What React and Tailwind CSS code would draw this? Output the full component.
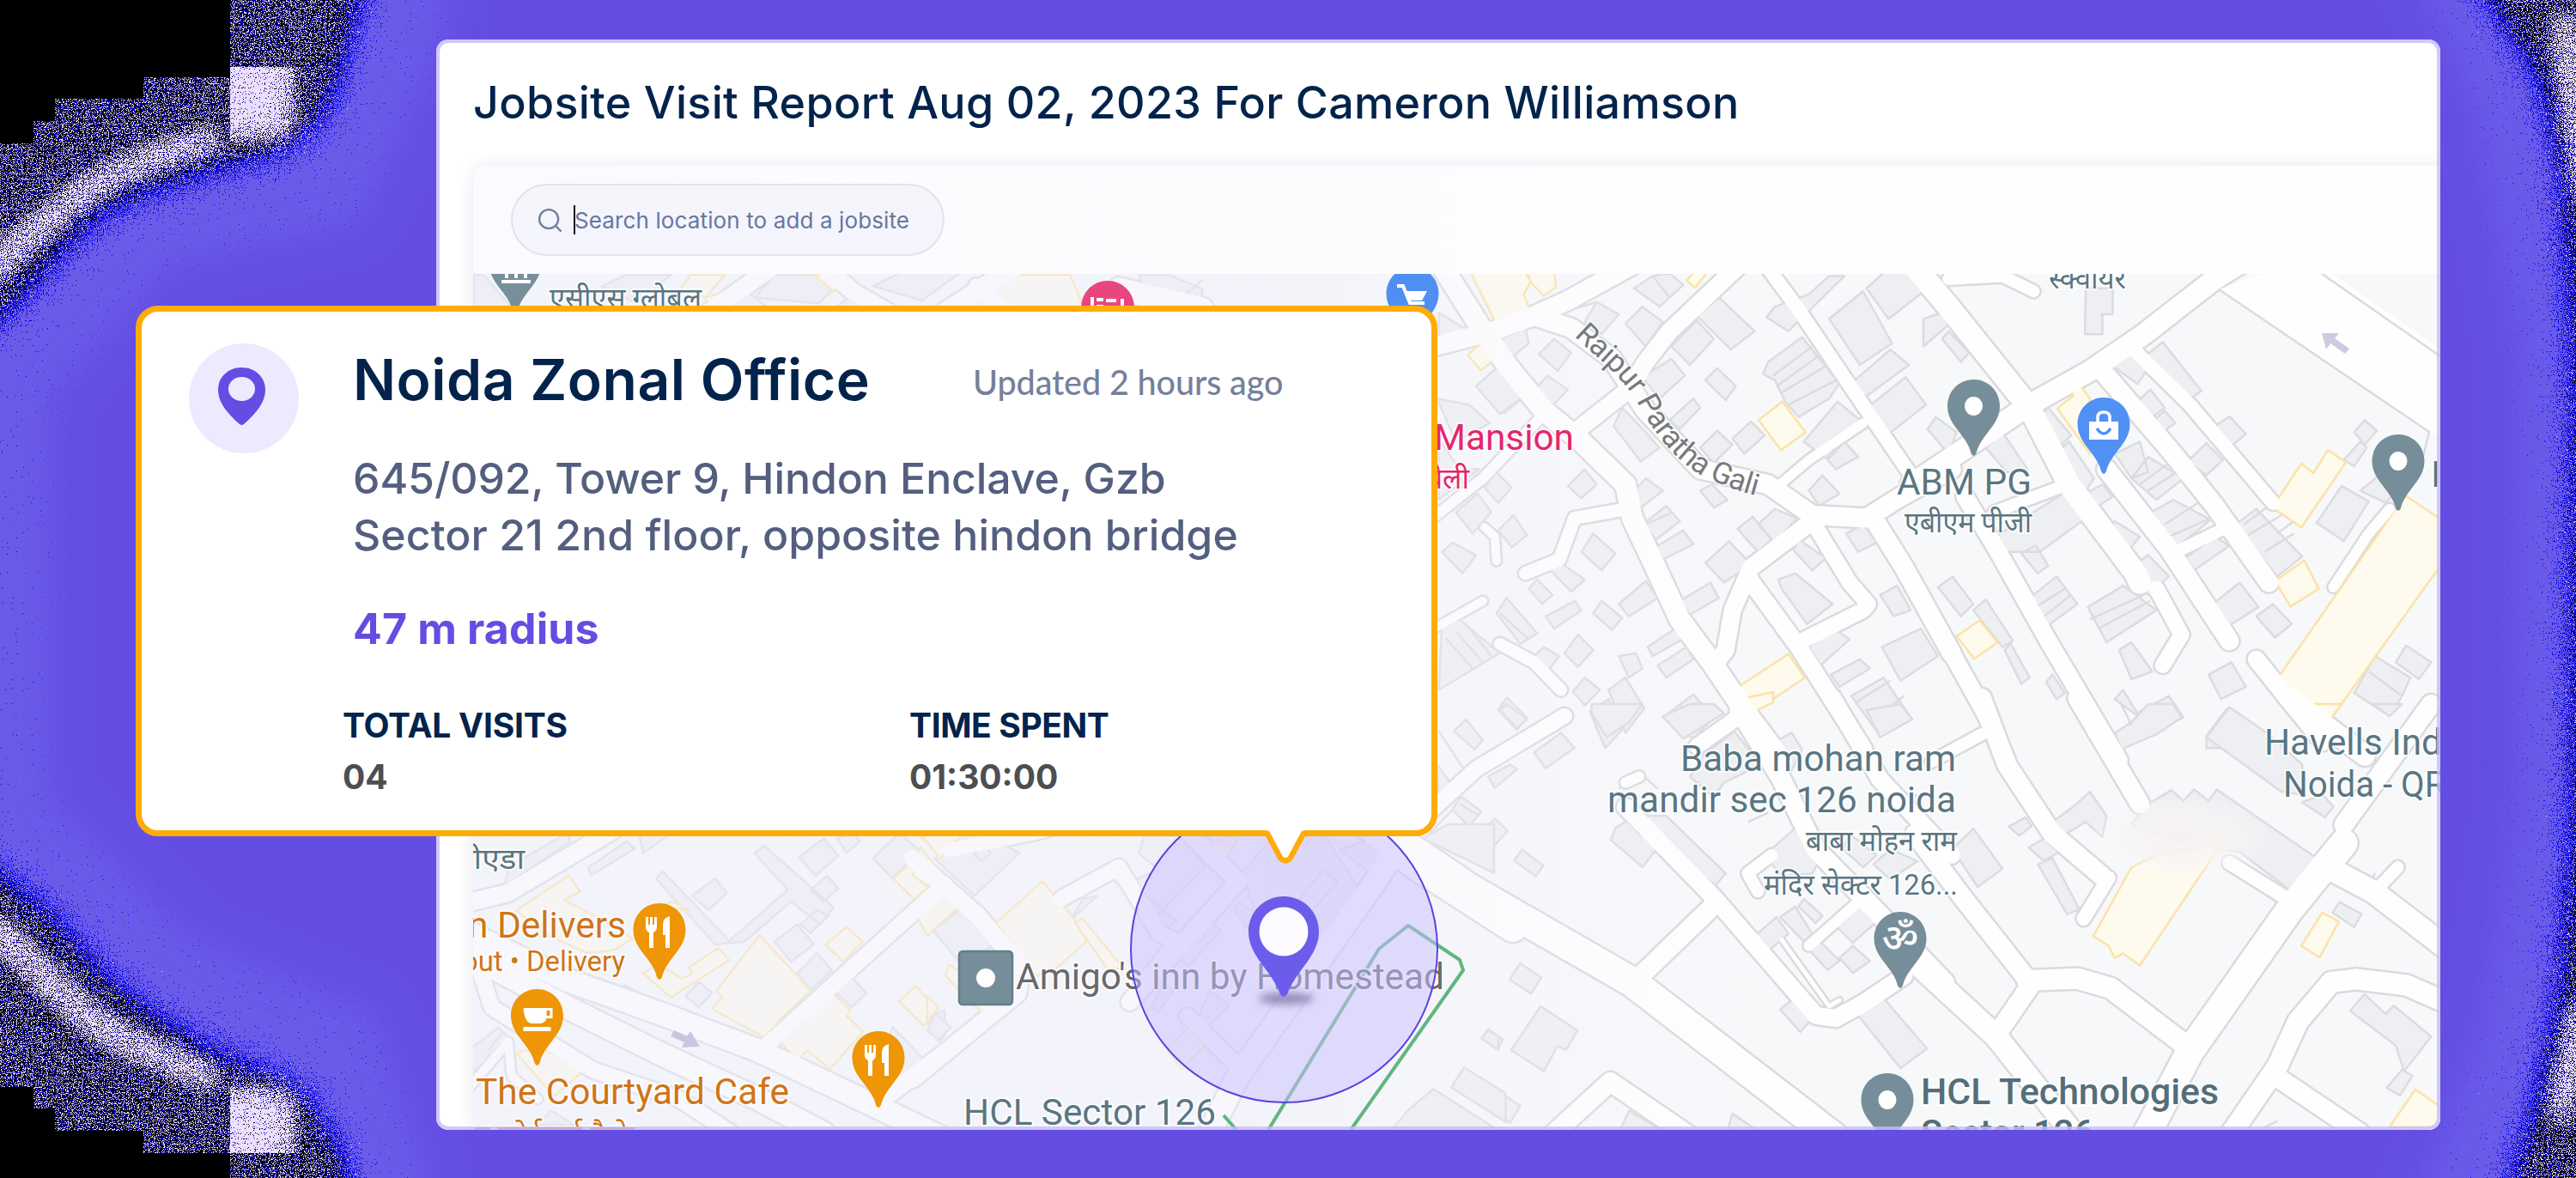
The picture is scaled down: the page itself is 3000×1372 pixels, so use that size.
import React from "react";
import { Search } from "lucide-react";

/* ---------- map tiles: each tile has its own local grid ---------- */
const tiles = [
  {
    // north centre
    t: "translate(1640 300) scale(.3954 .3571)",
    roads: [
      [24, "M100 30L215 230L290 350L400 500L500 590L640 740L660 850L720 990L800 1180L900 1330L985 1470L1100 1640"],
      [22, "M40 300L250 240L370 190L470 140L700 0"],
      [22, "M370 190L480 230L600 330L700 500L860 690L1060 740L1190 840L1350 850L1450 780L1600 690"],
      [20, "M490 570L650 430L700 340L770 240L980 20"],
      [16, "M1050 20L1150 170L1290 400L1450 660L1500 740"],
      [20, "M1190 860L1010 1010L955 1150L935 1280L900 1330"],
      [18, "M1190 860L1300 1060L1355 1130L1340 1150L1160 1250"],
      [20, "M1005 1050L1150 1270L1340 1600"],
      [22, "M1370 850L1460 1010L1600 1290"],
      [15, "M640 820L490 850L445 985L345 1030"],
      [12, "M60 860L220 720L400 510"],
      [10, "M225 880L255 910L260 990"],
      [14, "M270 1260L370 1320L450 1410"],
      [11, "M1090 745L1180 660L1340 540"],
      [10, "M60 1220L220 1120"],
    ],
    blocks:
      "M555 145L620 185L570 250L520 210zM690 160L750 210L700 290L640 215zM665 100L720 60L770 130L740 160zM720 60L770 50L810 90L770 130zM915 130L1020 240L950 300L850 190zM850 205L900 265L830 350L775 290zM775 330L815 385L740 460L690 390zM430 265L480 310L440 370L385 315zM345 230L355 280L300 330L255 275zM410 385L470 430L420 490L365 440zM280 340L365 430L270 510L200 420zM910 360L965 420L935 465L875 400zM840 460L860 490L800 560L770 530zM1010 535L1050 580L990 640L955 590zM910 565L955 610L900 670L860 620zM1160 260L1270 410L1240 460L1150 520L1110 470L1080 400L1045 380L1060 340zM1265 470L1330 530L1230 655L1165 600zM1180 120L1240 60L1285 60L1120 240L1055 195L1080 160zM1340 110L1425 280L1330 350L1240 200zM1350 100L1400 50L1520 50L1530 100L1415 200zM1420 300L1475 350L1340 460L1305 410zM1465 390L1525 480L1410 580L1340 500zM1285 600L1325 650L1260 690L1235 660zM1220 710L1270 770L1210 810L1180 760zM630 490L700 570L740 620L685 665L640 600L605 550zM520 690L555 740L510 785L470 745zM260 700L305 750L265 800L225 750zM205 770L245 830L190 900L140 830zM310 840L350 905L305 945L265 890zM700 720L750 760L680 820L650 780zM760 810L800 860L730 920L690 870zM810 890L840 935L740 990L720 950zM895 740L940 790L900 815L860 760zM1015 845L1070 920L1030 960L970 885zM1080 820L1145 850L1080 930L1030 870zM945 925L1010 1000L930 1060L875 995zM545 900L610 965L570 1020L510 960zM435 985L520 1050L480 1090L410 1010zM380 1050L425 1100L395 1130L355 1080zM290 1110L380 1225L330 1260L260 1160zM490 1120L510 1150L430 1210L405 1170zM700 1055L735 1110L650 1170L620 1130zM890 1060L915 1110L830 1165L800 1120zM570 1120L630 1175L600 1215L545 1160zM100 1180L150 1180L270 1290L90 1410zM500 1230L545 1280L500 1335L460 1290zM400 1270L445 1300L410 1350L360 1310zM800 1200L815 1240L720 1300L705 1270zM820 1270L840 1310L760 1370L735 1330zM620 1300L670 1290L690 1340L650 1370zM640 1370L695 1470L640 1550L590 1410zM520 1370L565 1410L520 1460L485 1415zM590 1440L630 1540L580 1600L535 1480zM290 1435L350 1500L320 1540L265 1475zM840 1425L900 1500L840 1568L750 1500zM1150 920L1230 980L1190 1020L1135 955zM1140 1030L1250 1130L1175 1195L1100 1080L1090 1050zM1340 870L1380 930L1325 960L1290 900zM1440 1070L1480 1150L1430 1170L1390 1100zM1240 1200L1300 1245L1215 1330L1180 1270zM1510 1210L1560 1300L1450 1380L1395 1270zM1330 1310L1360 1340L1270 1400L1245 1360zM1400 1370L1480 1500L1390 1560L1305 1430zM90 590L150 690L210 690L90 790zM85 460L180 480L240 540L140 600zM90 180L180 240L90 265zM130 930L200 970L160 1030L100 960z",
    yellow:
      "M175 30L350 40L360 80L340 120L360 175L340 190L260 218zM345 50L430 50L435 95L400 125L365 85zM222 270L265 322L215 368L175 318zM1102 470L1170 570L1098 628L1032 530zM1120 1293L1168 1370L1010 1488L990 1465L970 1475L945 1420zM820 75L840 50L880 50L845 98z",
    lines:
      "M435 185L555 145M200 420L280 340M280 510L390 410M1120 480L1260 400M1100 440L1235 350M1085 420L1210 320M1075 385L1190 290M1240 200L1340 110M110 1240L190 1340M140 1220L220 1320M170 1195L245 1300M800 1460L870 1530M1400 1480L1460 1430M1320 1450L1420 1380M700 870L780 830M270 1160L350 1240",
  },
  {
    // north east
    t: "translate(2240 300) scale(.4847 .3571)",
    roads: [
      [26, "M-20 30L60 160L255 490L350 740L510 1030L520 1060"],
      [24, "M-30 740L70 650L255 480L400 370L530 250L700 70L760 20"],
      [22, "M430 370L600 640L700 810L830 1060"],
      [16, "M505 300L640 480L840 800"],
      [22, "M440 690L590 950L735 1250"],
      [20, "M100 780L180 960L300 1250L470 1640"],
      [20, "M-30 1050L150 1490L200 1640"],
      [14, "M170 830L345 740"],
      [12, "M985 1075L1070 900L1120 820"],
      [20, "M800 1310L870 1430L960 1580"],
      [18, "M560 1080L620 1230L575 1330"],
      [14, "M60 70L190 60L265 110"],
      [14, "M600 965L720 885"],
    ],
    blocks:
      "M390 100L455 100L455 185L430 185L430 250L388 250zM575 275L668 435L620 480L530 325zM490 310L540 360L515 412L450 350zM545 430L580 490L550 520L515 470zM580 500L605 540L570 575L550 535zM735 518L775 575L740 615L695 555zM680 605L720 660L680 710L635 665zM1060 530L1090 565L1060 610L1035 570zM1050 600L1065 620L1035 680L1010 660zM1005 745L1070 795L1010 925L945 865zM1095 710L1140 760L1110 800L1050 760zM60 240L110 310L90 340L45 265zM0 200L45 180L60 220L0 290zM30 520L80 570L60 640L10 560zM190 570L250 690L200 700L150 620zM300 490L355 580L320 625L270 530zM350 600L410 720L390 760L325 630zM430 740L455 780L420 810L390 770zM460 640L520 600L540 700L500 720zM540 650L625 720L560 790L500 720zM600 790L690 855L600 955L510 860zM460 860L520 910L490 960L450 880zM340 765L390 850L280 960L200 960L150 930zM270 940L300 1005L275 1030L235 965zM540 970L590 1040L540 1100L490 1020zM320 1040L370 1130L300 1200L255 1110zM480 1070L560 1150L440 1255L395 1140zM70 1040L120 1130L90 1170L35 1075zM150 1115L215 1250L190 1270L120 1150zM210 1260L255 1370L235 1390L195 1280zM760 1060L805 1140L735 1200L695 1130zM700 910L735 940L650 1020L630 980zM840 1130L885 1195L845 1240L800 1170zM800 820L910 975L850 1040L750 870zM500 1255L550 1350L500 1375L470 1280zM740 1320L775 1400L715 1440L685 1360zM590 1430L625 1500L565 1540L520 1480zM480 1410L520 1500L460 1440zM730 1470L830 1560L830 1600L680 1600L680 1560zM1085 1300L1170 1370L1150 1430L1120 1495L1035 1420zM1160 1265L1220 1320L1190 1375L1135 1320zM310 1360L340 1420L320 1440L295 1385z",
    yellow:
      "M365 393L400 460L400 640L322 492L360 450L345 412zM972 628L1015 668L908 880L838 815L908 672L937 703zM1160 778L1250 860L1250 990L975 1512L842 1390L1140 810zM915 988L950 1080L882 1138L845 1055zM135 1183L178 1255L122 1308L80 1235z",
    lines:
      "M0 75L170 380M850 900L890 860M520 740L600 660M540 760L620 690M770 870L830 810M400 1180L530 1100M420 1210L545 1120M780 905L860 840M820 960L890 900M270 1140L340 1080M290 1170L355 1100M1070 1350L1150 1430M580 870L660 800M590 910L690 850",
  },
  {
    // south centre
    t: "translate(1640 820) scale(.3954 .352)",
    roads: [
      [34, "M-120 400L30 495L180 610L660 920L1250 1430"],
      [22, "M665 920L905 660"],
      [20, "M640 340L900 640L1100 900L1200 1030L1260 1040L1340 990L1460 900"],
      [22, "M975 20L1100 250L1200 480L1340 640L1580 920"],
      [18, "M850 140L975 40"],
      [18, "M60 360L200 215L460 40"],
      [20, "M1250 -20L1390 250L1600 500"],
      [22, "M420 1430L595 1250L830 1430"],
      [5, "M1100 780L1240 1000L1270 980"],
      [12, "M1180 800L1330 650"],
      [12, "M640 260L680 240"],
      [14, "M1030 620L1000 560L1070 500"],
    ],
    blocks:
      "M170 50L220 120L195 150L135 90zM290 0L350 50L320 80L270 20zM450 95L490 145L405 212L370 160zM540 0L690 0L650 60L585 110L540 30zM300 200L320 215L255 278L235 240zM155 305L215 355L180 405L130 350zM255 378L293 420L240 485L205 440zM335 482L398 535L375 570L312 518zM660 375L745 460L690 540L597 450L610 410zM760 370L935 560L905 600L745 470L700 370zM330 858L392 905L362 958L298 912zM390 1000L498 1080L465 1145L440 1130L400 1215L303 1145zM235 1075L278 1110L265 1140L216 1105zM165 1205L330 1330L300 1385L130 1260zM650 1345L760 1420L620 1420zM955 1355L1040 1420L940 1410zM750 40L830 0L900 0L930 30L810 115zM1130 95L1160 150L1120 240L1070 130zM870 170L960 90L1040 200L930 260L900 310L830 240zM1085 705L1120 760L1060 818L1018 770zM1140 670L1190 760L1165 785L1095 705zM1165 645L1220 700L1200 725L1150 670zM1330 665L1380 720L1310 790L1255 730zM1200 770L1270 850L1235 880L1170 800zM1310 800L1360 850L1310 890L1270 840zM1390 960L1528 1140L1450 1205L1318 1020zM1145 965L1198 1030L1155 1085L1095 1010zM1140 410L1210 520L1190 560L1100 570L1050 500zM1300 430L1380 500L1340 540L1280 480zM1420 480L1500 520L1420 580L1370 530zM1350 20L1450 0L1485 50L1390 110zM85 200L130 270L90 320z",
    yellow: "M950 -10L985 -10L1000 35L1075 -5L1075 -40z",
    lines:
      "M45 450L130 350M90 90L175 235M150 330L210 370M640 380L690 440M1400 360L1500 300M1000 390L1060 360M620 280L680 225L735 280",
  },
  {
    // south east
    t: "translate(2240 820) scale(.4847 .352)",
    roads: [
      [22, "M140 -20L200 200L310 430L430 570"],
      [16, "M445 575L385 710"],
      [22, "M370 -20L520 330"],
      [22, "M-20 430L100 650L255 920"],
      [26, "M-30 840L175 1100L370 1440"],
      [24, "M250 915L370 908L450 940L640 1140"],
      [22, "M175 1095L260 925"],
      [32, "M1010 460L880 680L640 1150L530 1440"],
      [16, "M735 525L880 650"],
      [26, "M970 540L1080 620L1250 800"],
      [24, "M730 1440L850 1200L900 1050L980 920L1040 910L1160 930L1260 990"],
      [22, "M850 1235L1050 1420"],
      [14, "M20 190L140 100"],
      [24, "M880 -20L1060 170"],
      [22, "M1010 400L1220 0"],
      [14, "M1085 620L1140 540"],
    ],
    blocks:
      "M735 10L830 100L910 200L910 300L860 290L680 110zM595 285L625 320L650 283L685 320L705 283L945 510L885 620L760 490L640 470L500 400L530 340zM960 300L985 340L965 375L910 325zM400 290L440 370L430 440L390 390L330 440L310 390L360 340zM245 375L260 405L230 435L205 405zM120 412L190 545L130 605L70 480zM290 445L325 490L290 520L253 475zM310 510L375 680L345 695L275 530zM1000 655L1053 695L1035 738L983 690zM1060 960L1110 1025L1130 998L1220 1100L1155 1215L1135 1130L1025 1015zM1150 1210L1175 1230L1145 1295L1113 1270zM460 95L500 60L540 0L600 0L620 45L560 100L475 150zM1080 0L1150 0L1120 40z",
    yellow:
      "M500 540L560 500L715 465L520 865L480 825L460 840L445 800L408 768zM958 690L998 720L952 838L908 800zM1182 1275L1250 1340L1250 1400L1120 1400zM910 0L1005 0L975 55z",
    lines:
      "M540 405L570 430L585 395L655 460M600 470L640 520M985 510L1070 595L1085 560M500 70L475 0M820 1400L850 1380",
  },
  {
    // south west
    t: "translate(500 960) scale(.3827 .3333)",
    roads: [
      [20, "M60 290L240 240L560 20L640 -40"],
      [26, "M100 370L420 545L700 660L1000 790L1568 1100"],
      [26, "M160 480L420 640L700 800L1000 960L1200 1080"],
      [18, "M140 460L190 640L330 740L500 860L760 960L920 1080"],
      [18, "M1010 790L1240 550L1568 210"],
      [20, "M1380 960L1568 800"],
      [10, "M100 950L240 760L250 880L330 960"],
    ],
    blocks:
      "M240 150L420 30L430 60L230 215zM600 60L625 85L490 180L485 150zM710 165L900 390L910 410L1090 230L990 100L1020 75L1230 290L1190 350L1100 270L960 410L870 420L690 190zM870 190L905 240L850 300L800 250zM1200 50L1245 110L1175 180L1125 115zM1210 180L1245 225L1200 270L1160 230zM1180 300L1215 320L1160 380L1130 350zM1120 350L1170 420L1100 480L1050 410zM1180 450L1225 510L1160 580L1120 520zM1270 515L1330 590L1285 640L1220 570zM1430 30L1490 90L1410 190L1350 120zM640 40L740 30L650 100zM1240 50L1290 30L1310 60L1270 100zM210 710L245 750L130 870L130 780zM820 550L860 590L820 640L780 600zM1410 710L1530 850L1410 960L1380 800zM1510 680L1568 650L1568 740L1550 760zM370 1000L440 1050L330 1050z",
    yellow:
      "M425 178L458 235L410 265L520 330L620 400L560 440L480 450L330 370L265 300zM880 432L912 475L735 605L650 520L700 490L770 540L800 520L790 500zM1005 388L1160 580L1070 680L1020 745L860 645L890 605L875 580zM1215 575L1280 650L1270 670L1320 725L1220 855L1150 790L1120 825L1055 745zM1270 360L1318 410L1260 480L1205 420zM1495 105L1555 180L1475 262L1412 190zM1540 230L1580 200L1580 330L1520 380L1468 310zM1480 565L1545 650L1505 705L1430 620zM355 790L470 860L380 950L310 860L265 800L290 790zM1480 30L1580 30L1580 130zM740 270L790 300L700 290z",
    lines:
      "M940 500L1070 670M1150 790L1270 670M400 880L440 830M420 540L560 640M590 560L830 700M170 820L230 760M180 790L220 730M1400 960L1530 850",
  },
  {
    // around the job site
    t: "translate(1080 940) scale(.4209 .3333)",
    roads: [
      [20, "M-40 180L140 380L260 560L250 650L-40 950"],
      [18, "M370 320L530 210L640 440L690 470L560 680"],
      [20, "M700 60L860 260L560 680"],
      [26, "M1340 60L1250 240L860 940L780 1140"],
      [18, "M720 730L870 920"],
      [34, "M1240 80L1350 200L1620 420"],
      [16, "M60 150L300 90L500 20"],
    ],
    blocks:
      "M120 70L255 160L130 310L20 180zM15 430L100 350L180 400L200 460L100 560zM600 100L700 100L770 210L620 400L580 250L640 220L585 160zM470 310L400 390L430 320zM520 220L690 400L660 420L510 250zM760 375L812 430L720 560L670 490zM1095 220L1135 260L1040 400L990 380zM860 330L960 420L930 500L850 360zM870 230L960 100L1100 100L1195 290L1050 560L920 420zM1140 150L1230 110L1290 130L1230 235zM780 640L835 690L770 780L745 750zM650 620L680 640L640 715L620 700zM1440 60L1568 60L1568 230L1370 110zM1550 780L1580 800L1580 850L1535 810zM1485 910L1600 1000L1600 1100L1450 980zM1330 1060L1400 985L1568 1120L1290 1120zM20 720L65 770L30 815L0 780z",
    yellow:
      "M318 260L400 380L440 470L350 570L300 590L190 405zM430 390L540 560L500 570L410 405zM45 275L95 340L0 450L-30 380zM-20 140L35 225L0 275L-40 240zM-20 90L100 90L35 180zM60 550L230 700L168 740L50 590zM720 770L768 830L705 915L665 850zM0 660L30 700L0 750zM780 130L840 100L860 110L820 190z",
    lines:
      "M155 130L175 160L150 190L130 165zM270 520L400 380M350 570L440 470M200 460L120 560M760 440L770 450L755 470",
  },
  {
    // strip above the popover
    t: "translate(500 0) scale(.574 .3333)",
    roads: [
      [20, "M560 1100L690 940"],
      [22, "M1020 1120L1190 930"],
      [20, "M800 930L860 1020L960 1120"],
      [18, "M1180 1100L1110 1000"],
      [26, "M1568 1080L1400 1010"],
    ],
    blocks:
      "M400 960L490 960L420 1060L350 1000zM700 960L780 960L820 1010L790 1060L660 1040zM960 950L1080 950L1000 1050L900 1000zM560 1080L640 1010L690 1080zM880 1000L930 1080L820 1080zM1440 960L1500 960L1568 1010L1568 1080L1460 1080zM90 960L110 960L170 1080L90 1080z",
    yellow:
      "M530 960L600 960L560 1040L510 1010zM780 960L850 960L820 1020zM1180 960L1300 960L1330 1080L1040 1080zM560 1040L600 1020L570 1080z",
    lines: "M1240 960L1270 1080M1210 960L1220 1080M1120 1000L1160 1080M1400 1080L1440 1000M1500 1080L1568 980",
  },
];

const NS = "non-scaling-stroke";

function MapTiles() {
  return (
    <>
      {tiles.map((r, i) => (
        <g key={i} transform={r.t} fill="none" stroke="#dadadf" strokeLinejoin="round" strokeLinecap="round">
          {r.roads.map(([w, d], j) => (
            <path key={j} d={d} strokeWidth={w + 5} vectorEffect={NS} />
          ))}
        </g>
      ))}
      {tiles.map((r, i) => (
        <g key={i} transform={r.t} strokeWidth="2.5" strokeLinejoin="round">
          <path d={r.blocks} fill="#eeeff2" stroke="#dcdce0" vectorEffect={NS} />
          <path d={r.lines} fill="none" stroke="#dcdce0" vectorEffect={NS} />
          <path d={r.yellow} fill="#fefaee" stroke="#fbe3a6" vectorEffect={NS} />
        </g>
      ))}
      {tiles.map((r, i) => (
        <g key={i} transform={r.t} fill="none" stroke="#fefefe" strokeLinejoin="round" strokeLinecap="round">
          {r.roads.map(([w, d], j) => (
            <path key={j} d={d} strokeWidth={w} vectorEffect={NS} />
          ))}
        </g>
      ))}
    </>
  );
}

function Pin({ x, y, color, children }) {
  return (
    <g transform={`translate(${x} ${y})`}>
      <path d="M0 0C17 0 30.500 13.500 30.500 31C30.500 43 24 52 17 61C10 70 5 77 3 86Q0 92 -3 86C-5 77 -10 70 -17 61C-24 52 -30.500 43 -30.500 31C-30.500 13.500 -17 0 0 0Z" fill={color} />
      {children || <ellipse cy="31" rx="10.500" ry="11" fill="#fff" />}
    </g>
  );
}

function Cutlery() {
  return (
    <g fill="#fff">
      <path d="M-16 16h3v9h2v-9h3v9h2v-9h3v12q0 4-4 6v18h-5v-18q-4-2-4-6z" />
      <path d="M12 15v37h-5v-15h-3v-12q0-8 8-10z" />
    </g>
  );
}

function Label({ x, y, w, size = 42, color = "#5a7683", weight = 400, anchor = "start", children }) {
  return (
    <text
      x={x}
      y={y}
      fontSize={size}
      fontWeight={weight}
      fill={color}
      textAnchor={anchor}
      textLength={w}
      lengthAdjust="spacingAndGlyphs"
      stroke="#fff"
      strokeWidth="4"
      strokeOpacity=".75"
      paintOrder="stroke"
    >
      {children}
    </text>
  );
}

function SiteMap() {
  return (
    <svg
      className="block h-[997px] w-[2291px] font-['Roboto','Noto_Sans',sans-serif]"
      viewBox="551 319 2291 997"
    >
      <defs>
        <linearGradient id="tint" x1="0" x2="1" y1="0" y2="0">
          <stop offset="0" stopColor="#eeeefb" stopOpacity=".45" />
          <stop offset=".4" stopColor="#eeeefb" stopOpacity=".45" />
          <stop offset=".65" stopColor="#f4f5fb" stopOpacity="0" />
        </linearGradient>
        <radialGradient id="haze">
          <stop offset="0" stopColor="#f6f1f1" />
          <stop offset=".5" stopColor="#f7f5f4" stopOpacity=".85" />
          <stop offset="1" stopColor="#f8f9fb" stopOpacity="0" />
        </radialGradient>
        <filter id="soft" x="-50%" y="-150%" width="200%" height="400%">
          <feGaussianBlur stdDeviation="5" />
        </filter>
        <path id="gali" d="M1833 391C1868 425 1893 440 1914 482C1938 520 1965 550 2000 562Q2025 573 2060 581" />
      </defs>
      <rect x="551" y="319" width="2291" height="997" fill="#f7f8fa" />
      <MapTiles />
      <path d="M2584 337L2690 300L2860 420V520L2829 503z" fill="#fefefe" />
      <path d="M2584 337L2829 503L2820 540M2700 316L2842 415" fill="none" stroke="#dadadf" strokeWidth="2.500" />
      <ellipse cx="2540" cy="975" rx="110" ry="48" fill="url(#haze)" />
      <rect x="551" y="319" width="2291" height="997" fill="url(#tint)" />

      <path d="M2704 388h20l-5 6 17 12-5 6-17-12-5 7z" fill="#cdcbe0" />
      <path d="M781 1207l4-7 15 7 4-6 11 18-21 1 3-6z" fill="#c9c7e0" />
      <path d="M1477 1316L1606 1105L1640 1078L1700 1118L1704 1130L1573 1316M1425 1299L1440 1316" fill="none" stroke="#62b57f" strokeWidth="4" strokeLinejoin="round" />

      <text fontSize="35" fill="#77797c" stroke="#fff" strokeWidth="3" strokeOpacity=".7" paintOrder="stroke">
        <textPath href="#gali" textLength="290">Raipur Paratha Gali</textPath>
      </text>

      <Label x="1833" y="524" w="163" color="#e5266c" anchor="end">Mansion</Label>
      <Label x="1711" y="569" size="33" color="#e5266c" anchor="end">हवेली</Label>
      <Label x="2209" y="576" w="157">ABM PG</Label>
      <Label x="2218" y="620" w="148" size="33">एबीएम पीजी</Label>
      <Label x="2386" y="336" w="90" size="33">स्क्वायर</Label>
      <Label x="2831" y="567">India</Label>
      <Label x="1957" y="898" w="321">Baba mohan ram</Label>
      <Label x="1872" y="946" w="406">mandir sec 126 noida</Label>
      <Label x="2103" y="991" w="176" size="33">बाबा मोहन राम</Label>
      <Label x="2054" y="1042" w="226" size="33">मंदिर सेक्टर 126...</Label>
      <Label x="2637" y="879" w="240">Havells India</Label>
      <Label x="2659" y="928" w="217">Noida - QRG</Label>
      <Label x="2237" y="1286" w="347" weight="500" color="#546e7a">HCL Technologies</Label>
      <Label x="2237" y="1334" w="202" weight="500" color="#546e7a">Sector 126</Label>
      <Label x="729" y="1092" size="43" w="184" color="#cf7519" anchor="end">n Delivers</Label>
      <Label x="728" y="1131" size="34" w="190" color="#cf7519" anchor="end">out • Delivery</Label>
      <Label x="554" y="1286" size="43" w="365" color="#cf7519">The Courtyard Cafe</Label>
      <Label x="553" y="1334" size="34" w="186" color="#cf7519">द कोर्टयार्ड कैफे</Label>
      <Label x="611" y="1012" size="33" w="80" anchor="end">नोएडा</Label>
      <Label x="640" y="359" size="34" w="177">एसीएस ग्लोबल</Label>
      <Label x="1122" y="1310" w="294">HCL Sector 126</Label>

      <Pin x="600" y="276" color="#778f9b">
        <path d="M584 328h34M590 324v-8M601 324v-8M612 324v-8" transform="translate(-600 -276)" stroke="#fff" strokeWidth="4" />
      </Pin>
      <circle cx="1290" cy="358" r="31" fill="#e9467f" />
      <path d="M1272 346v14M1277 357h8M1277 349h8M1288 350h12M1307 348v12" stroke="#fff" strokeWidth="4" />
      <Pin x="1645" y="311" color="#4f8ff4">
        <g transform="translate(-1645 -311)" fill="none" stroke="#fff" strokeWidth="4">
          <path d="M1627 333h7l8 20h17" />
          <path d="M1637 339h25l-6 11h-15z" fill="#fff" stroke="none" />
        </g>
      </Pin>
      <Pin x="2298.500" y="442" color="#768e9a" />
      <Pin x="2793" y="506" color="#768e9a" />
      <Pin x="2198" y="1250" color="#768e9a" />
      <Pin x="2213" y="1062" color="#768e9a">
        <text y="46" fontSize="45" fontWeight="500" fill="#fff" textAnchor="middle">ॐ</text>
      </Pin>
      <Pin x="2450" y="463" color="#5191f3">
        <path d="M-17 28H17V49H-17z" fill="#fff" />
        <path d="M-7 28v-5q0-6 7-6t7 6v5" fill="none" stroke="#fff" strokeWidth="3.500" />
        <path d="M-8 36q8 12 16 0" fill="none" stroke="#5191f3" strokeWidth="3.500" />
      </Pin>
      <Pin x="768" y="1052" color="#ee9606"><Cutlery /></Pin>
      <Pin x="1023" y="1201" color="#ee9606"><Cutlery /></Pin>
      <Pin x="625.500" y="1152" color="#ee9606">
        <path d="M-16 22H18V34H11Q9 40 3 40H-7Q-15 38 -16 22zM-16 44H16V49H-16z" fill="#fff" />
        <path d="M11 25h4v6h-4z" fill="#ee9606" />
      </Pin>
      <rect x="1117" y="1108" width="62" height="62" rx="4" fill="#768e9a" stroke="#627f8c" strokeWidth="2.500" />
      <circle cx="1148" cy="1139" r="11" fill="#fff" />
      <Label x="1183" y="1152" w="499" color="#68696c">Amigo's inn by Homestead</Label>

      <circle cx="1495.500" cy="1105.500" r="178.500" fill="#c9bfff" fillOpacity=".5" stroke="#5a43de" strokeWidth="2" />
      <ellipse cx="1498" cy="1163" rx="32" ry="7" fill="#5f588a" fillOpacity=".6" filter="url(#soft)" />
      <path d="M1495 1044c23 0 41 18 41 41 0 20-13 34-23 48q-10 14-14 25-4 6-8 0-4-11-14-25c-10-14-23-28-23-48 0-23 18-41 41-41z" fill="#6c5ceb" />
      <circle cx="1495" cy="1085" r="28.500" fill="#fbfaff" />
    </svg>
  );
}

/* ---------- grainy purple backdrop ---------- */
function Grain({ id, seed, color, blur, bias = "-85" }) {
  return (
    <filter id={id} filterUnits="userSpaceOnUse" x="-60" y="-60" width="3120" height="1500" colorInterpolationFilters="sRGB">
      <feGaussianBlur in="SourceAlpha" stdDeviation={blur} result="b" />
      <feTurbulence type="fractalNoise" baseFrequency=".83" numOctaves="2" seed={seed} />
      <feColorMatrix values="0 0 0 0 0  0 0 0 0 0  0 0 0 0 0  1 0 0 0 0" result="n" />
      <feComposite in="b" in2="n" operator="arithmetic" k2="60" k3="110" k4={bias} result="m" />
      <feFlood floodColor={color} />
      <feComposite in2="m" operator="in" />
    </filter>
  );
}

function Backdrop() {
  const core =
    "M-160 425L0 385L60 318L110 265L160 235L268 200L330 185L385 140L410 60L470 -160H2830L2890 0L2950 90L2976 200L2990 400V950L2975 1150L2945 1290L2880 1500H440L405 1340L355 1260L268 1225L190 1180L130 1135L80 1075L0 1005L-160 960Z";
  return (
    <svg className="absolute inset-0 h-[1372px] w-[3000px]" viewBox="0 0 3000 1372">
      <defs>
        <clipPath id="steps">
          <path d="M0 167H39V141H64V115H167V90H268V0H3000V1372H268V1343H167V1317H64V1291H39V1266H0Z" />
        </clipPath>
        <clipPath id="plates">
          <path d="M268 78H420V190H268zM268 1240H420V1343H268z" />
        </clipPath>
        <Grain id="grainBlue" seed="3" color="#0000e6" blur="22" />
        <Grain id="grainPale" seed="11" color="#ecdfff" blur="20" />
        <Grain id="grainCore" seed="23" color="#6a5be9" blur="22" bias="-82" />
        <filter id="smooth" filterUnits="userSpaceOnUse" x="-60" y="-60" width="3120" height="1500">
          <feGaussianBlur stdDeviation="22" />
        </filter>
      </defs>
      <g clipPath="url(#steps)">
        <path d="M-100 -100H3100V1500H-100z" fillOpacity=".38" filter="url(#grainBlue)" />
        <path d="M-100 -100H3100V1500H-100z" fillOpacity=".37" filter="url(#grainPale)" />
        <path
          d="M-60 350L0 305L40 270L100 222L160 190L240 165L268 150M-60 1060L0 1085L60 1145L120 1200L190 1230L268 1265M2985 0L3010 250M3010 1150L2975 1320"
          fill="none"
          stroke="#000"
          strokeOpacity=".8"
          strokeWidth="52"
          filter="url(#grainPale)"
        />
        <path d={core} stroke="#000" strokeWidth="26" filter="url(#grainBlue)" />
        <g clipPath="url(#plates)">
          <path d="M210 20H350V170H210zM210 1260H350V1400H210z" fillOpacity=".85" filter="url(#grainPale)" />
        </g>
        <path d={core} filter="url(#grainCore)" />
        <path d="M60 460L200 310L420 260L520 40V-60H2800L2880 120L2930 400V950L2890 1200L2800 1440H520L440 1180L220 1090L60 930Z" fill="#644ee3" filter="url(#smooth)" />
      </g>
    </svg>
  );
}

function Popover() {
  return (
    <div className="absolute left-[158px] top-[356px] h-[618px] w-[1516px] rounded-[26px] border-[7px] border-[#ffab08] bg-white">
      <div className="flex pl-[55px] pt-[37px]">
        <div className="flex h-[128px] w-[128px] shrink-0 items-start justify-center rounded-full bg-[#ede9fe] pt-[28px]">
          <svg className="mr-[6px] h-[67px] w-[55px]" viewBox="0 0 55 67">
            <path fillRule="evenodd" fill="#644de2" d="M27.500 0C43 0 55 11 55 26C55 43 40 57 30 66Q27.500 68 25 66C15 57 0 43 0 26C0 11 12 0 27.500 0ZM27.500 11A15.500 14 0 1 0 27.500 39A15.500 14 0 1 0 27.500 11Z" />
          </svg>
        </div>
        <div className="ml-[63px]">
          <div className="flex h-[88px]">
            <h2 className="w-[722px] whitespace-nowrap text-[66px] font-semibold leading-[84px] tracking-[0.5px] text-[#02234b]">Noida Zonal Office</h2>
            <span className="whitespace-nowrap font-['Lato'] text-[39.500px] font-medium leading-[90px] tracking-[-0.1px] text-[#76809c]">Updated 2 hours ago</span>
          </div>
          <p className="mt-[36px] whitespace-nowrap text-[50px] font-medium leading-[66px] tracking-[-0.1px] text-[#545f7f]">
            645/092, Tower 9, Hindon Enclave, Gzb
            <br />
            <span className="tracking-[0.04px]">Sector 21 2nd floor, opposite hindon bridge</span>
          </p>
          <p className="mt-[43px] text-[50px] font-bold leading-[66px] tracking-[0.15px] text-[#644de2]">47 m radius</p>
        </div>
      </div>
      <dl className="ml-[234px] mt-[50px] grid grid-cols-[660px_1fr] text-[39px] font-bold leading-[60px] text-[#4d4e53]">
        <dt className="tracking-[-0.25px] text-[#02234b]">TOTAL VISITS</dt>
        <dt className="tracking-[-0.4px] text-[#02234b]">TIME SPENT</dt>
        <dd>04</dd>
        <dd>01:30:00</dd>
      </dl>
      <svg className="absolute left-[1306px] top-[603px] h-[42px] w-[52px]" viewBox="0 0 52 42">
        <path d="M4 0L20 33Q26 40 32 33L48 0" fill="#fff" />
        <path d="M4 3L20 33Q26 40 32 33L48 3" fill="none" stroke="#ffab08" strokeWidth="6.500" />
      </svg>
    </div>
  );
}

export default function App() {
  return (
    <div className="relative h-[1372px] w-[3000px] overflow-hidden bg-black pl-[508px] pt-[46px] font-['Inter',sans-serif]">
      <Backdrop />
      <main className="relative h-[1270px] w-[2334px] overflow-hidden rounded-[14px] bg-white">
        <h1 className="ml-[43px] h-[147px] whitespace-nowrap pt-[41px] text-[52px] font-medium leading-[66px] tracking-[0.32px] text-[#02234b]">
          Jobsite Visit Report Aug 02, 2023 For Cameron Williamson
        </h1>
        <section className="ml-[43px] h-[1123px] rounded-tl-[14px] bg-gradient-to-r from-[#fbfafe] to-white shadow-[0_0_18px_rgba(40,30,120,0.10)]">
          <div className="flex h-[126px] pl-[44px] pt-[21px]">
            <div className="flex h-[84px] w-[505px] items-center rounded-full border-2 border-[#e4e3ea] bg-gradient-to-b from-[#f6f5fb] to-[#f3f4fd] pl-[27px]">
              <Search className="h-[33px] w-[33px] text-[#71809f]" strokeWidth={1.7} />
              <span className="ml-[11px] h-[34px] w-[2px] bg-[#0b1020]" />
              <span className="-ml-px whitespace-nowrap text-[26px] tracking-[0.12px] text-[#66779f]">Search location to add a jobsite</span>
            </div>
          </div>
          <SiteMap />
        </section>
        <div className="pointer-events-none absolute inset-0 rounded-[14px] border-[4px] border-[#c6bcf8]/80" />
      </main>
      <Popover />
    </div>
  );
}
